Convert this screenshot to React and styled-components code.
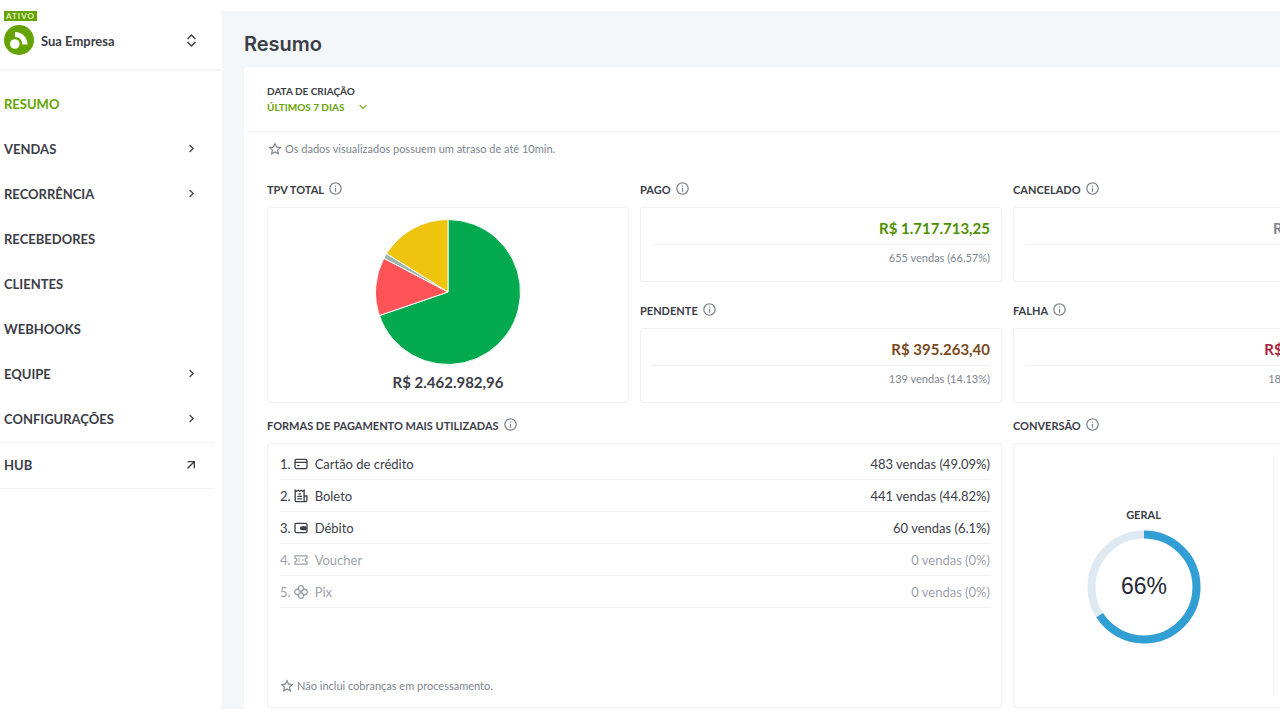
import React from "react";
import styled, { createGlobalStyle } from "styled-components";
import {
  RiArrowDownSLine,
  RiArrowRightSLine,
  RiArrowRightUpLine,
  RiExpandUpDownLine,
  RiInformationLine,
  RiStarLine,
} from "react-icons/ri";

const GlobalStyle = createGlobalStyle`
  *, *::before, *::after {
    box-sizing: border-box;
  }
  body {
    margin: 0;
    background: #fff;
    color: #3b3d47;
    font-family: Lato, "Liberation Sans", sans-serif;
    font-size: 13px;
  }
  button, select {
    font: inherit;
    color: inherit;
    background: none;
    border: 0;
    padding: 0;
    cursor: pointer;
  }
  svg {
    display: block;
    flex: none;
  }
`;

const LayoutStyles = styled.div`
  display: flex;
  height: 100vh;
  padding: 11px 0;
  overflow: hidden;
`;

const SidebarStyles = styled.aside`
  flex: 0 0 222px;
`;

const SidebarHeader = styled.div`
  height: 60px;
  padding-left: 4px;
  border-bottom: 2px solid #f5f6f8;
`;

const Badge = styled.span`
  display: block;
  width: 33px;
  height: 10px;
  background: #65a300;
  color: #e6f2d0;
  font-size: 8px;
  font-weight: 700;
  line-height: 10px;
  letter-spacing: 1px;
  text-align: center;
`;

const CompanyButton = styled.button`
  display: flex;
  align-items: center;
  width: 100%;
  margin-top: 4px;
  padding-right: 22px;
  font-size: 13px;
  font-weight: 700;
  svg:last-child {
    margin-left: auto;
    stroke: currentColor;
  }
`;

const CompanyName = styled.span`
  margin-left: 7px;
  padding-top: 2px;
`;

const NavList = styled.ul`
  list-style: none;
  width: 214px;
  margin: 11px 0 0;
  padding: 0;
`;

const NavItem = styled.li`
  border-style: solid;
  border-color: #f0f2f4;
  border-width: ${(props) => (props.$divided ? "1px 0" : "0")};
  a,
  button {
    display: flex;
    align-items: center;
    justify-content: space-between;
    width: 100%;
    height: 45px;
    padding: 0 15px 2px 4px;
    color: ${(props) => (props.$active ? "#65a300" : "inherit")};
    font-size: 13px;
    font-weight: 700;
    text-decoration: none;
  }
  svg {
    stroke: currentColor;
  }
`;

const MainStyles = styled.main`
  flex: 1;
  min-width: 0;
  display: flex;
  flex-direction: column;
  padding-left: 22px;
  background: #f3f7fa;
  overflow: hidden;
`;

const PageTitle = styled.h1`
  margin: 0;
  height: 56px;
  padding-top: 9px;
  font-family: Inter, "Liberation Sans", sans-serif;
  font-size: 20px;
  font-weight: 600;
  line-height: 48px;
`;

const Panel = styled.section`
  flex: 1;
  display: flex;
  flex-direction: column;
  background: #fff;
  border-top-left-radius: 4px;
`;

const FilterBar = styled.div`
  height: 65px;
  padding: 16px 23px 0;
  border-bottom: 1px solid #eff1f4;
  font-size: 10px;
  font-weight: 700;
  line-height: 16px;
  label {
    display: block;
  }
`;

const SelectWrap = styled.div`
  display: inline-grid;
  align-items: center;
  color: #65a300;
  select,
  svg {
    grid-area: 1 / 1;
  }
  select {
    appearance: none;
    height: 16px;
    padding-right: 25px;
  }
  svg {
    justify-self: end;
    pointer-events: none;
    stroke: currentColor;
  }
`;

const Note = styled.p`
  display: flex;
  align-items: center;
  gap: 3px;
  margin: 0;
  color: #7d858f;
  font-size: 11px;
  line-height: 16px;
`;

const PanelBody = styled.div`
  flex: 1;
  display: flex;
  flex-direction: column;
  padding: 9px 23px 1px;
  > ${Note} {
    margin: 0 1px 22px;
  }
`;

const Board = styled.div`
  flex: 1;
  display: grid;
  grid-template-columns: repeat(3, minmax(362px, 1fr));
  grid-template-rows: auto 1fr;
  gap: 12px 11px;
`;

const Stack = styled.div`
  display: flex;
  flex-direction: column;
  gap: 18px;
`;

const SectionStyles = styled.section`
  display: flex;
  flex-direction: column;
  grid-column: ${(props) => (props.$wide ? "span 2" : "auto")};
`;

const SectionTitle = styled.h2`
  display: flex;
  align-items: center;
  gap: 4px;
  height: 20px;
  margin: 0 0 8px;
  font-size: 11px;
  font-weight: 700;
  svg {
    margin-bottom: 2px;
    color: #7d858f;
  }
`;

const Card = styled.div`
  flex: 1;
  display: flex;
  flex-direction: column;
  padding: 0 11px;
  border: 1px solid #eff1f4;
  border-radius: 3px;
`;

const PieCard = styled(Card)`
  align-items: center;
  padding-top: 11px;
`;

const Total = styled.strong`
  margin-top: 7px;
  font-size: 15px;
  line-height: 20px;
`;

const Amount = styled.strong`
  height: 37px;
  padding-top: 2px;
  border-bottom: 1px solid #eff1f4;
  color: ${(props) => props.$color};
  font-size: 15px;
  line-height: 36px;
  text-align: right;
`;

const SalesCount = styled.span`
  height: 36px;
  color: #7d858f;
  font-size: 11px;
  line-height: 26px;
  text-align: right;
`;

const PaymentList = styled.ol`
  list-style: none;
  margin: 4px 0 0;
  padding: 0;
`;

const PaymentRow = styled.li`
  display: flex;
  align-items: center;
  height: 32px;
  border-bottom: 1px solid #eff1f4;
  color: ${(props) => (props.$muted ? "#9da3ab" : "#3b3d47")};
  svg {
    margin: 0 7px 0 3px;
  }
  span:last-child {
    margin-left: auto;
  }
`;

const PaymentCard = styled(Card)`
  justify-content: space-between;
  padding: 0 11px 13px 12px;
`;

const ConversionCard = styled(Card)`
  flex-direction: row;
  padding: 11px 0;
`;

const ConversionCell = styled.div`
  flex: ${(props) => (props.$side ? "0 0 100px" : "1")};
  display: flex;
  flex-direction: column;
  align-items: center;
  justify-content: center;
  gap: 5px;
  padding-bottom: 3px;
  border-right: ${(props) => (props.$side ? "0" : "1px solid #eff1f4")};
  h3 {
    margin: 0;
    font-size: 11px;
    line-height: 20px;
  }
`;

const navItems = [
  { label: "RESUMO", active: true },
  { label: "VENDAS", nested: true },
  { label: "RECORRÊNCIA", nested: true },
  { label: "RECEBEDORES" },
  { label: "CLIENTES" },
  { label: "WEBHOOKS" },
  { label: "EQUIPE", nested: true },
  { label: "CONFIGURAÇÕES", nested: true },
];

const slices = [
  { color: "#02a94f", value: 69.74 },
  { color: "#ff5357", value: 12.96 },
  { color: "#9fb5ad", value: 1.2 },
  { color: "#eec40f", value: 16.1 },
];

const PaymentIcon = ({ children }) => (
  <svg width="14" height="14" viewBox="0 0 14 14" fill="none" stroke="currentColor" strokeWidth="1.3">
    {children}
  </svg>
);

const CardIcon = () => (
  <PaymentIcon>
    <rect x="1" y="2.4" width="12" height="9.2" rx="1.4" />
    <path d="M1 5.4H13M3.2 8.6H5.4" />
  </PaymentIcon>
);

const BoletoIcon = () => (
  <PaymentIcon>
    <path d="M11.5 12.6H2.4A1.2 1.2 0 0 1 1.2 11.4V1.2L2.8 2.2 4.3 1.2 5.7 2.2 7.1 1.2 8.6 2.2 10.1 1.2V11.2A1.4 1.4 0 0 0 12.9 11.2V7H10.1" />
    <path d="M3.4 7.4H7.9M3.4 9.8H7.9M4.6 5H6.8" />
  </PaymentIcon>
);

const DebitIcon = () => (
  <PaymentIcon>
    <rect x="1" y="2.4" width="12" height="9.2" rx="1.4" />
    <path d="M12.5 5.2H8A2 2 0 0 0 8 9.2H12.5Z" fill="currentColor" stroke="none" />
  </PaymentIcon>
);

const VoucherIcon = () => (
  <PaymentIcon>
    <path d="M1 2.8H13V5.2A1.8 1.8 0 0 0 13 8.8V11.2H1V8.8A1.8 1.8 0 0 0 1 5.2Z" />
    <path d="M5 5V6.4M5 7.6V9M8 7H9.4" />
  </PaymentIcon>
);

const PixIcon = () => (
  <PaymentIcon>
    <path d="M7 7 4.9 4.9A2.6 2.6 0 1 1 9.1 4.9ZM7 7 9.1 4.9A2.6 2.6 0 1 1 9.1 9.1ZM7 7 9.1 9.1A2.6 2.6 0 1 1 4.9 9.1ZM7 7 4.9 9.1A2.6 2.6 0 1 1 4.9 4.9Z" />
    <path d="M4.6 4.6 9.4 9.4M9.4 4.6 4.6 9.4" />
  </PaymentIcon>
);

const payments = [
  { name: "Cartão de crédito", icon: CardIcon, sales: "483 vendas (49.09%)" },
  { name: "Boleto", icon: BoletoIcon, sales: "441 vendas (44.82%)" },
  { name: "Débito", icon: DebitIcon, sales: "60 vendas (6.1%)" },
  { name: "Voucher", icon: VoucherIcon, sales: "0 vendas (0%)", muted: true },
  { name: "Pix", icon: PixIcon, sales: "0 vendas (0%)", muted: true },
];

const Logo = () => (
  <svg width="30" height="30" viewBox="0 0 30 30">
    <circle cx="15" cy="15" r="15" fill="#65a300" />
    <path d="M11 7C18 7 23.4 12 23.6 19.6H18.4C18.2 15 15.6 12 11 12Z" fill="#fff" />
    <circle cx="10.8" cy="19" r="6.2" fill="#65a300" />
    <circle cx="10.8" cy="19" r="4.8" fill="#fff" />
  </svg>
);

const PieChart = ({ data }) => {
  const point = (percent) => {
    const angle = (percent / 100) * Math.PI * 2;
    return `${73 + 72.5 * Math.sin(angle)} ${73 - 72.5 * Math.cos(angle)}`;
  };
  let sum = 0;
  return (
    <svg width="146" height="146" viewBox="0 0 146 146">
      {data.map((slice) => {
        const start = sum;
        sum += slice.value;
        return (
          <path
            key={slice.color}
            d={`M73 73L${point(start)}A72.5 72.5 0 ${slice.value > 50 ? 1 : 0} 1 ${point(sum)}Z`}
            fill={slice.color}
            stroke="#fff"
            strokeWidth="1"
          />
        );
      })}
    </svg>
  );
};

const Ring = ({ percent }) => (
  <svg width="114" height="114" viewBox="0 0 114 114">
    <circle cx="57" cy="57" r="52.5" fill="none" stroke="#dfe9f2" strokeWidth="8" />
    <circle
      cx="57"
      cy="57"
      r="52.5"
      fill="none"
      stroke="#329fd4"
      strokeWidth="8"
      pathLength="100"
      strokeDasharray={`${percent} 100`}
      transform="rotate(-90 57 57)"
    />
    <text x="57" y="64" textAnchor="middle" fill="#262a38" fontFamily="Liberation Sans, Arial, sans-serif" fontSize="23">
      {percent}%
    </text>
  </svg>
);

const Section = ({ title, wide, children }) => (
  <SectionStyles $wide={wide}>
    <SectionTitle>
      {title}
      <RiInformationLine size={15} />
    </SectionTitle>
    {children}
  </SectionStyles>
);

const StatSection = ({ title, amount, color, sales }) => (
  <Section title={title}>
    <Card>
      <Amount $color={color}>{amount}</Amount>
      <SalesCount>{sales}</SalesCount>
    </Card>
  </Section>
);

const Sidebar = () => (
  <SidebarStyles>
    <SidebarHeader>
      <Badge>ATIVO</Badge>
      <CompanyButton type="button">
        <Logo />
        <CompanyName>Sua Empresa</CompanyName>
        <RiExpandUpDownLine size={17} />
      </CompanyButton>
    </SidebarHeader>
    <nav>
      <NavList>
        {navItems.map((item) => (
          <NavItem key={item.label} $active={item.active}>
            {item.nested ? (
              <button type="button">
                {item.label}
                <RiArrowRightSLine size={15} />
              </button>
            ) : (
              <a href="#">{item.label}</a>
            )}
          </NavItem>
        ))}
        <NavItem $divided>
          <a href="#">
            HUB
            <RiArrowRightUpLine size={16} />
          </a>
        </NavItem>
      </NavList>
    </nav>
  </SidebarStyles>
);

const App = () => {
  return (
    <LayoutStyles>
      <GlobalStyle />
      <Sidebar />
      <MainStyles>
        <PageTitle>Resumo</PageTitle>
        <Panel>
          <FilterBar>
            <label htmlFor="period">DATA DE CRIAÇÃO</label>
            <SelectWrap>
              <select id="period">
                <option>ÚLTIMOS 7 DIAS</option>
              </select>
              <RiArrowDownSLine size={14} />
            </SelectWrap>
          </FilterBar>
          <PanelBody>
            <Note>
              <RiStarLine size={14} />
              Os dados visualizados possuem um atraso de até 10min.
            </Note>
            <Board>
              <Section title="TPV TOTAL">
                <PieCard>
                  <PieChart data={slices} />
                  <Total>R$ 2.462.982,96</Total>
                </PieCard>
              </Section>
              <Stack>
                <StatSection title="PAGO" amount="R$ 1.717.713,25" color="#508f00" sales="655 vendas (66.57%)" />
                <StatSection title="PENDENTE" amount="R$ 395.263,40" color="#7a4a21" sales="139 vendas (14.13%)" />
              </Stack>
              <Stack>
                <StatSection title="CANCELADO" amount="R$ 29.612,40" color="#7d858f" sales="8 vendas (0.8%)" />
                <StatSection title="FALHA" amount="R$ 320.393,91" color="#a8233c" sales="182 vendas (18.5%)" />
              </Stack>
              <Section title="FORMAS DE PAGAMENTO MAIS UTILIZADAS" wide>
                <PaymentCard>
                  <PaymentList>
                    {payments.map(({ name, icon: Icon, sales, muted }, index) => (
                      <PaymentRow key={name} $muted={muted}>
                        {index + 1}.
                        <Icon />
                        <span>{name}</span>
                        <span>{sales}</span>
                      </PaymentRow>
                    ))}
                  </PaymentList>
                  <Note>
                    <RiStarLine size={14} />
                    Não inclui cobranças em processamento.
                  </Note>
                </PaymentCard>
              </Section>
              <Section title="CONVERSÃO">
                <ConversionCard>
                  <ConversionCell>
                    <h3>GERAL</h3>
                    <Ring percent={66} />
                  </ConversionCell>
                  <ConversionCell $side />
                </ConversionCard>
              </Section>
            </Board>
          </PanelBody>
        </Panel>
      </MainStyles>
    </LayoutStyles>
  );
};

export default App;
